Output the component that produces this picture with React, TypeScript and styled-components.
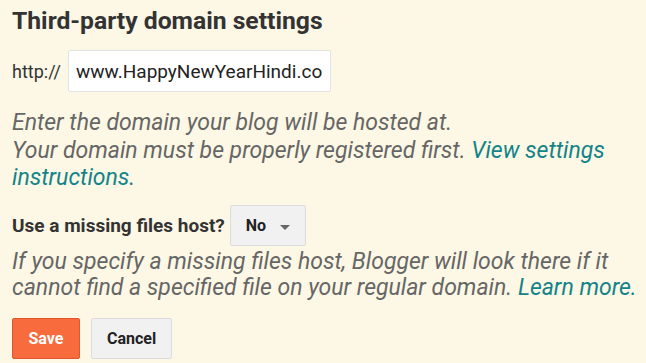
import React from "react";
import styled, { createGlobalStyle } from "styled-components";

const Global = createGlobalStyle`
  html, body { margin: 0; padding: 0; background: #fdf8e5; }
  body { font-family: Roboto, "Liberation Sans", sans-serif; color: #333; }
`;

const Page = styled.div`
  width: 646px;
  height: 363px;
  box-sizing: border-box;
  padding: 6px 0 0 12px;
  overflow: hidden;
`;

const Title = styled.h2`
  margin: 0;
  font-family: Roboto, sans-serif;
  font-weight: 700;
  font-size: 24.7px;
  line-height: 30px;
  color: #333;
`;

const DomainRow = styled.div`
  display: flex;
  align-items: center;
  gap: 7px;
  margin-top: 14px;
`;

const Prefix = styled.span`
  font-size: 18px;
  color: #333;
`;

const TextInput = styled.div`
  box-sizing: border-box;
  width: 263px;
  height: 42px;
  display: flex;
  align-items: center;
  padding-left: 7px;
  background: #fff;
  border: 1px solid #e3e3e3;
  border-radius: 2px;
  font-size: 19px;
  color: #222;
  white-space: nowrap;
  overflow: hidden;
`;

const Help = styled.p<{ $lh: number }>`
  margin: 0;
  font-family: Roboto, sans-serif;
  font-style: italic;
  font-size: 23px;
  line-height: ${(p) => p.$lh}px;
  color: #666;
`;

const Link = styled.a`
  color: #128389;
  text-decoration: none;
`;

const FirstHelp = styled(Help)`
  margin-top: 17px;
`;

const HostRow = styled.div`
  display: flex;
  align-items: center;
  gap: 5px;
  margin-top: 13.5px;
`;

const Label = styled.span`
  font-weight: 700;
  font-size: 19px;
  color: #333;
`;

const SelectBox = styled.div`
  box-sizing: border-box;
  width: 76px;
  height: 41px;
  display: flex;
  align-items: center;
  justify-content: space-between;
  padding: 0 15px 0 15px;
  background: #f1f1f1;
  border: 1px solid #dcdcdc;
  border-radius: 2px;
  font-weight: 700;
  font-size: 16px;
  color: #222;
`;

const Caret = styled.span`
  width: 0;
  height: 0;
  border-left: 5px solid transparent;
  border-right: 5px solid transparent;
  border-top: 5px solid #666;
  margin-top: 3px;
`;

const SecondHelp = styled(Help)`
  margin-top: 2.5px;
`;

const Buttons = styled.div`
  display: flex;
  gap: 11px;
  margin-top: 16.5px;
`;

const Button = styled.button<{ $primary?: boolean }>`
  box-sizing: border-box;
  height: 41px;
  padding: 0 ${(p) => (p.$primary ? 15.5 : 15)}px;
  border-radius: 2px;
  font-family: Roboto, sans-serif;
  font-weight: 700;
  font-size: 16px;
  cursor: pointer;
  background: ${(p) => (p.$primary ? "#f76b3d" : "#f1f1f1")};
  border: 1px solid ${(p) => (p.$primary ? "#e0552a" : "#dcdcdc")};
  color: ${(p) => (p.$primary ? "#fff" : "#222")};
`;

export default function App() {
  return (
    <>
      <Global />
      <Page>
        <Title>Third-party domain settings</Title>
        <DomainRow>
          <Prefix>http://</Prefix>
          <TextInput>www.HappyNewYearHindi.co</TextInput>
        </DomainRow>
        <FirstHelp $lh={27.5}>
          Enter the domain your blog will be hosted at.
          <br />
          Your domain must be properly registered first.{" "}
          <Link href="#">View settings instructions.</Link>
        </FirstHelp>
        <HostRow>
          <Label>Use a missing files host?</Label>
          <SelectBox>
            No
            <Caret />
          </SelectBox>
        </HostRow>
        <SecondHelp $lh={26.5}>
          If you specify a missing files host, Blogger will look there if it
          cannot find a specified file on your regular domain.{" "}
          <Link href="#">Learn more.</Link>
        </SecondHelp>
        <Buttons>
          <Button $primary>Save</Button>
          <Button>Cancel</Button>
        </Buttons>
      </Page>
    </>
  );
}
